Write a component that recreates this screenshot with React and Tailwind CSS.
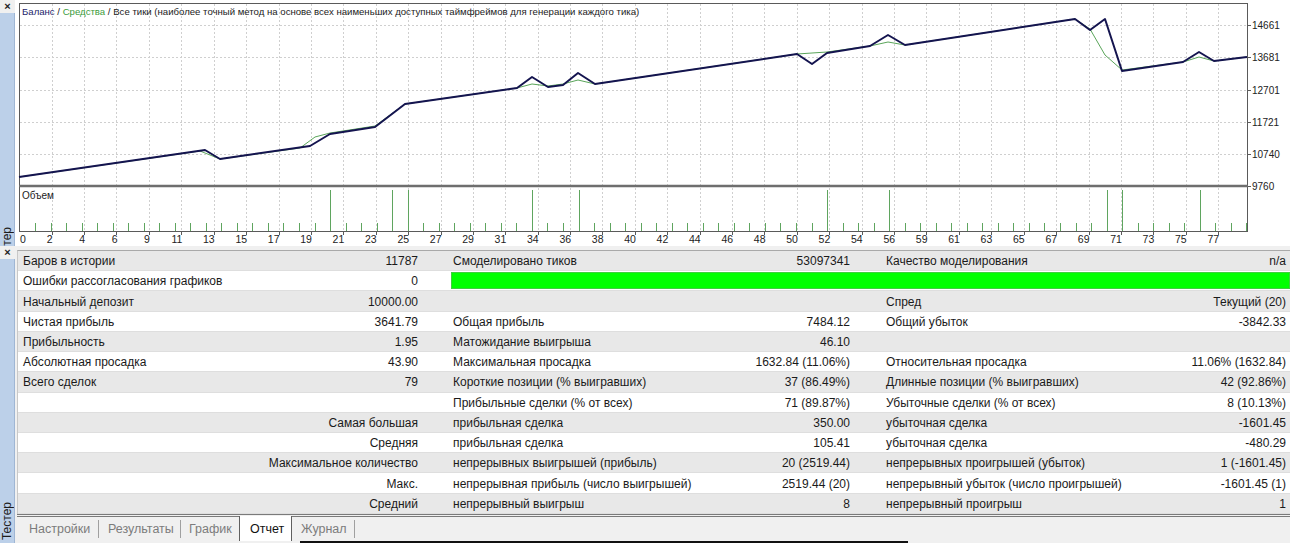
import React from 'react';

const balance = [
  [19, 177], [205, 150], [220, 159], [310, 146], [330, 134], [375, 127], [405, 104], [517, 88],
  [532, 77], [548, 87], [563, 85], [578, 73], [595, 84], [797, 54], [812, 64], [827, 53],
  [870, 46], [888, 35], [905, 45], [1075, 19], [1090, 30], [1105, 19], [1122, 71], [1183, 62],
  [1199, 52], [1214, 61], [1247, 57],
];

const equity = [
  [19, 177], [200, 151], [220, 159], [300, 148], [315, 137], [330, 133], [375, 126], [405, 104],
  [517, 88], [532, 84], [548, 86], [563, 84], [578, 80], [595, 84], [797, 54], [812, 53], [827, 52],
  [870, 46], [888, 42], [905, 45], [1075, 19], [1090, 29], [1105, 55], [1122, 70], [1183, 62],
  [1199, 57], [1214, 61], [1247, 57],
];

const xLabels = [0, 2, 4, 6, 9, 11, 13, 15, 17, 19, 21, 23, 25, 27, 29, 31, 34, 36, 38, 40, 42, 44, 46, 48, 50, 52, 54, 56, 59, 61, 63, 65, 67, 69, 71, 73, 75, 77];
const yLabels = [['14661', 25], ['13681', 57.3], ['12701', 89.6], ['11721', 121.9], ['10740', 154.2], ['9760', 186]];
const tall = [19, 23, 24, 32, 35, 51, 55, 69, 70, 75];

const pts = (a) => a.map((p) => p.join(',')).join(' ');

function Chart() {
  const gridX = Array.from({ length: 37 }, (_, k) => 19.3 + 32.4 * (k + 1));
  return (
    <svg width="1275" height="246" viewBox="15 0 1275 246" className="block bg-white">
      <g fontFamily="'Liberation Sans', Arial, sans-serif" fontSize="10">
        {gridX.map((x, i) => (
          <line key={i} x1={Math.round(x) + 0.5} x2={Math.round(x) + 0.5} y1="4" y2="231" stroke="#cfcfcf" strokeDasharray="2 2" />
        ))}
        {yLabels.slice(0, 5).map(([, y], i) => (
          <line key={i} x1="20" x2="1247" y1={Math.round(y) + 0.5} y2={Math.round(y) + 0.5} stroke="#cfcfcf" strokeDasharray="2 2" />
        ))}
        <rect x="19.5" y="3.5" width="1228" height="228" fill="none" stroke="#5a5a5a" />
        <line x1="19" x2="1248" y1="186" y2="186" stroke="#6e6e6e" strokeWidth="2.5" />

        <polyline points={pts(equity)} fill="none" stroke="#5aa55a" strokeWidth="1" />
        <polyline points={pts(balance)} fill="none" stroke="#14144f" strokeWidth="2" strokeLinejoin="round" />

        {Array.from({ length: 79 }, (_, i) => {
          const x = Math.round(35 + 15.53 * i) + 0.5;
          return <line key={i} x1={x} x2={x} y1={tall.includes(i) ? 190 : 223} y2="231" stroke="#5fa55f" strokeWidth="1" />;
        })}

        {yLabels.map(([t, y]) => (
          <g key={t}>
            <line x1="1248" x2="1251" y1={Math.round(y) + 0.5} y2={Math.round(y) + 0.5} stroke="#5a5a5a" />
            <text x="1252" y={y + 4} fill="#222">{t}</text>
          </g>
        ))}
        {gridX.map((x, i) => (
          <line key={'t' + i} x1={Math.round(x) + 0.5} x2={Math.round(x) + 0.5} y1="231" y2="235" stroke="#5a5a5a" />
        ))}
        {xLabels.map((l, i) =>
          i === 0 ? (
            <text key={l} x="20" y="243" fontSize="10.5" fill="#222">{l}</text>
          ) : (
            <text key={l} x={gridX[i - 1] + 1} y="243" fontSize="10.5" textAnchor="end" fill="#222">{l}</text>
          )
        )}
        <text x="22" y="199" fill="#222" fontSize="10">Объем</text>
        <text x="22" y="15" fill="#222" fontSize="9.6">
          <tspan fill="#24246a">Баланс</tspan>
          <tspan> / </tspan>
          <tspan fill="#3c9c3c">Средства</tspan>
          <tspan> / Все тики (наиболее точный метод на основе всех наименьших доступных таймфреймов для генерации каждого тика)</tspan>
        </text>
      </g>
    </svg>
  );
}

function Strip({ clip }) {
  return (
    <div className="w-[15px] flex flex-col shrink-0">
      <div className="h-[13px] flex items-center justify-center text-[11px] font-bold leading-[13px] text-[#222] bg-[#f0f0f0]">×</div>
      <div className="flex-1 bg-[#bcd0e9] border-r border-[#9fb6d4] flex flex-col justify-end items-center overflow-hidden">
        <span className={`[writing-mode:vertical-rl] rotate-180 text-[12px] leading-[14px] text-[#1c1c1c] ${clip ? 'mb-[-19px]' : 'mb-[3px]'}`}>
          Тестер
        </span>
      </div>
    </div>
  );
}

const rows = [
  [['Баров в истории', '11787'], ['Смоделировано тиков', '53097341'], ['Качество моделирования', 'n/a']],
  'bar',
  [['Начальный депозит', '10000.00'], ['', ''], ['Спред', 'Текущий (20)']],
  [['Чистая прибыль', '3641.79'], ['Общая прибыль', '7484.12'], ['Общий убыток', '-3842.33']],
  [['Прибыльность', '1.95'], ['Матожидание выигрыша', '46.10'], ['', '']],
  [['Абсолютная просадка', '43.90'], ['Максимальная просадка', '1632.84 (11.06%)'], ['Относительная просадка', '11.06% (1632.84)']],
  [['Всего сделок', '79'], ['Короткие позиции (% выигравших)', '37 (86.49%)'], ['Длинные позиции (% выигравших)', '42 (92.86%)']],
  [['', ''], ['Прибыльные сделки (% от всех)', '71 (89.87%)'], ['Убыточные сделки (% от всех)', '8 (10.13%)']],
  [['', 'Самая большая'], ['прибыльная сделка', '350.00'], ['убыточная сделка', '-1601.45']],
  [['', 'Средняя'], ['прибыльная сделка', '105.41'], ['убыточная сделка', '-480.29']],
  [['', 'Максимальное количество'], ['непрерывных выигрышей (прибыль)', '20 (2519.44)'], ['непрерывных проигрышей (убыток)', '1 (-1601.45)']],
  [['', 'Макс.'], ['непрерывная прибыль (число выигрышей)', '2519.44 (20)'], ['непрерывный убыток (число проигрышей)', '-1601.45 (1)']],
  [['', 'Средний'], ['непрерывный выигрыш', '8'], ['непрерывный проигрыш', '1']],
];

const widths = ['w-[430px] pr-[30px]', 'w-[433px] pr-[31px]', 'flex-1 pr-[4px]'];

function Cell({ label, value, w }) {
  return (
    <div className={`flex items-center pt-[1px] ${w}`}>
      <span className="pl-[5px]">{label}</span>
      <span className="ml-auto">{value}</span>
    </div>
  );
}

function Table() {
  return (
    <div className="flex flex-col border-t border-[#a9a9a9] border-l border-l-[#c8c8c8]">
      {rows.map((r, i) => (
        <div key={i} className={`h-[20.23px] flex border-b border-[#dedede] ${i % 2 === 0 ? 'bg-[#e8e8e8]' : 'bg-white'}`}>
          {r === 'bar' ? (
            <>
              <Cell label="Ошибки рассогласования графиков" value="0" w={widths[0]} />
              <div className="flex-1 ml-[3px] my-[1px] bg-[#00ff00] border border-[#3fcf3f]" />
            </>
          ) : (
            r.map(([l, v], j) => <Cell key={j} label={l} value={v} w={widths[j]} />)
          )}
        </div>
      ))}
    </div>
  );
}

function Tabs() {
  const sep = <div className="w-px h-[18px] bg-[#a0a0a0]" />;
  return (
    <div className="flex flex-col border-t-[3px] border-double border-[#7a7a7a] bg-[#f0f0f0] flex-1">
      <div className="flex items-stretch h-[24px] text-[12.5px] text-[#7c7c7c]">
        <div className="w-[81px] pl-[12px] pt-[2px] flex items-center">Настройки</div>
        <div className="flex items-center">{sep}</div>
        <div className="w-[81px] pl-[9px] pt-[2px] flex items-center">Результаты</div>
        <div className="flex items-center">{sep}</div>
        <div className="w-[58px] pl-[8px] pt-[2px] flex items-center">График</div>
        <div className="w-[53px] pl-[10px] pt-[2px] flex items-center bg-white text-[#111] border-l border-r border-[#606060] mt-[-1px]">Отчет</div>
        <div className="w-[62px] pl-[9px] pt-[2px] flex items-center">Журнал</div>
        <div className="flex items-center">{sep}</div>
      </div>
      <div className="h-[2px] flex">
        <div className="w-[283px]" />
        <div className="w-[608px] bg-[#111]" />
      </div>
    </div>
  );
}

export default function App() {
  return (
    <div className="w-[1290px] h-[543px] overflow-hidden bg-[#f0f0f0] flex flex-col font-['Liberation_Sans',Arial,sans-serif] text-[12px] text-[#1a1a1a]">
      <div className="h-[246px] flex">
        <Strip clip />
        <Chart />
      </div>
      <div className="flex-1 flex">
        <Strip />
        <div className="w-[2px] bg-[#f0f0f0]" />
        <div className="flex-1 flex flex-col pt-[4px]">
          <Table />
          <Tabs />
        </div>
      </div>
    </div>
  );
}
